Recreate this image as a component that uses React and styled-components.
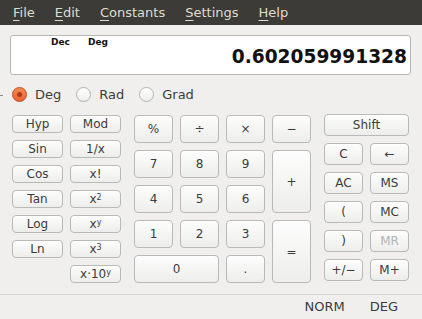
import React from 'react'
import styled, { createGlobalStyle } from 'styled-components'

const GlobalStyle = createGlobalStyle`
  html, body {
    margin: 0;
    padding: 0;
    background: #f0efed;
    font-family: "DejaVu Sans", "Liberation Sans", sans-serif;
  }
  * { box-sizing: border-box; }
`

const menus = [
  { key: 'F', rest: 'ile' },
  { key: 'E', rest: 'dit' },
  { key: 'C', rest: 'onstants' },
  { key: 'S', rest: 'ettings' },
  { key: 'H', rest: 'elp' },
]

const leftKeys = [
  ['Hyp'], ['Mod'],
  ['Sin'], ['1/x'],
  ['Cos'], ['x!'],
  ['Tan'], ['x', '2'],
  ['Log'], ['x', 'y'],
  ['Ln'], ['x', '3'],
]

const App = () => {
  return (
    <Window>
      <GlobalStyle />
      <MenuBar>
        {menus.map(m => (
          <MenuItem key={m.key}>
            <u>{m.key}</u>{m.rest}
          </MenuItem>
        ))}
      </MenuBar>

      <Display>
        <Flags>
          <span>Dec</span>
          <span>Deg</span>
        </Flags>
        <Value>0.602059991328</Value>
      </Display>

      <AngleRow>
        <Stub />
        <Radio>
          <Dot $checked />
          Deg
        </Radio>
        <Radio>
          <Dot />
          Rad
        </Radio>
        <Radio>
          <Dot />
          Grad
        </Radio>
      </AngleRow>

      <Keypad>
        <FuncGrid>
          {leftKeys.map(([label, sup], i) => (
            <Key key={i}>
              {label}
              {sup && <sup>{sup}</sup>}
            </Key>
          ))}
          <Key $col="2">x·10<sup>y</sup></Key>
        </FuncGrid>

        <NumGrid>
          <Key>%</Key>
          <Key>÷</Key>
          <Key>×</Key>
          <Key>−</Key>
          <Key>7</Key>
          <Key>8</Key>
          <Key>9</Key>
          <Key $rows="2">+</Key>
          <Key>4</Key>
          <Key>5</Key>
          <Key>6</Key>
          <Key>1</Key>
          <Key>2</Key>
          <Key>3</Key>
          <Key $rows="2">=</Key>
          <Key $cols="2">0</Key>
          <Key>.</Key>
        </NumGrid>

        <MemGrid>
          <Key $cols="2">Shift</Key>
          <Key>C</Key>
          <Key>←</Key>
          <Key>AC</Key>
          <Key>MS</Key>
          <Key>(</Key>
          <Key>MC</Key>
          <Key>)</Key>
          <Key $disabled>MR</Key>
          <Key>+/−</Key>
          <Key>M+</Key>
        </MemGrid>
      </Keypad>

      <StatusBar>
        <span>NORM</span>
        <span>DEG</span>
      </StatusBar>
    </Window>
  )
}

export default App

const Window = styled.div`
  width: 422px;
  height: 319px;
  overflow: hidden;
  background: #f0efed;
  display: flex;
  flex-direction: column;
`

const MenuBar = styled.div`
  height: 25px;
  background: #3c3b37;
  display: flex;
  align-items: center;
  padding-left: 13px;
  gap: 20px;
`

const MenuItem = styled.span`
  color: #dfdbd2;
  font-size: 13px;
  line-height: 25px;

  u {
    text-decoration: underline;
    text-underline-offset: 3px;
    text-decoration-thickness: 1px;
  }
`

const Display = styled.div`
  margin: 10px 11px 0 10px;
  height: 40px;
  background: #ffffff;
  border: 1px solid #b6b6b3;
  border-radius: 3px;
  padding: 1px 3px 0 0;
  display: flex;
  flex-direction: column;
`

const Flags = styled.div`
  display: flex;
  gap: 18px;
  padding-left: 40px;
  font-size: 9px;
  font-weight: bold;
  line-height: 10px;
  color: #111;
`

const Value = styled.div`
  text-align: right;
  font-size: 18.6px;
  font-weight: bold;
  line-height: 20px;
  color: #111;
`

const AngleRow = styled.div`
  margin-top: 12px;
  height: 15px;
  display: flex;
  align-items: center;
  padding-left: 12px;
  gap: 16px;
  position: relative;
`

const Stub = styled.span`
  position: absolute;
  left: 0;
  top: 8px;
  width: 3px;
  height: 1px;
  background: #8a8a8a;
`

const Radio = styled.label`
  display: flex;
  align-items: center;
  gap: 8px;
  font-size: 13px;
  color: #3c3c3c;
  margin-right: -1px;
`

const Dot = styled.span`
  width: 15px;
  height: 15px;
  border-radius: 50%;
  display: flex;
  align-items: center;
  justify-content: center;
  border: 1px solid ${p => (p.$checked ? '#c74a1b' : '#b3b3b0')};
  background: ${p =>
    p.$checked
      ? 'linear-gradient(#f58a5a, #e9622f)'
      : 'linear-gradient(#ffffff, #eeeeec)'};

  &::after {
    content: '';
    width: 5px;
    height: 5px;
    border-radius: 50%;
    background: ${p => (p.$checked ? '#b13a10' : 'transparent')};
  }
`

const Keypad = styled.div`
  margin-top: 13px;
  padding-left: 12px;
  display: flex;
  align-items: flex-start;
  gap: 13px;
`

const FuncGrid = styled.div`
  display: grid;
  grid-template-columns: 51px 51px;
  grid-auto-rows: 18px;
  gap: 7px;
`

const NumGrid = styled.div`
  display: grid;
  grid-template-columns: repeat(4, 39px);
  grid-auto-rows: 28px;
  gap: 7px;
`

const MemGrid = styled.div`
  margin-top: -1px;
  display: grid;
  grid-template-columns: 39px 39px;
  grid-auto-rows: 22px;
  gap: 7px;
`

const Key = styled.button`
  grid-column: ${p => (p.$col ? p.$col : p.$cols ? `span ${p.$cols}` : 'auto')};
  grid-row: ${p => (p.$rows ? `span ${p.$rows}` : 'auto')};
  margin: 0;
  padding: 0;
  border: 1px solid #b9b9b6;
  border-radius: 4px;
  background: linear-gradient(#fdfdfd, #ededeb);
  box-shadow: inset 0 1px 0 #ffffff;
  color: ${p => (p.$disabled ? '#b3b3b0' : '#3c3c3c')};
  font-family: "DejaVu Sans", "Liberation Sans", sans-serif;
  font-size: 12px;
  line-height: 1;
  display: flex;
  align-items: center;
  justify-content: center;

  sup {
    font-size: 8px;
    line-height: 0;
    position: relative;
    top: -1px;
  }
`

const StatusBar = styled.div`
  margin-top: 11px;
  border-top: 1px solid #d6d5d2;
  flex: 1;
  display: flex;
  justify-content: flex-end;
  align-items: center;
  gap: 25px;
  padding-right: 24px;
  padding-bottom: 1px;
  font-size: 13px;
  color: #3c3c3c;
`
